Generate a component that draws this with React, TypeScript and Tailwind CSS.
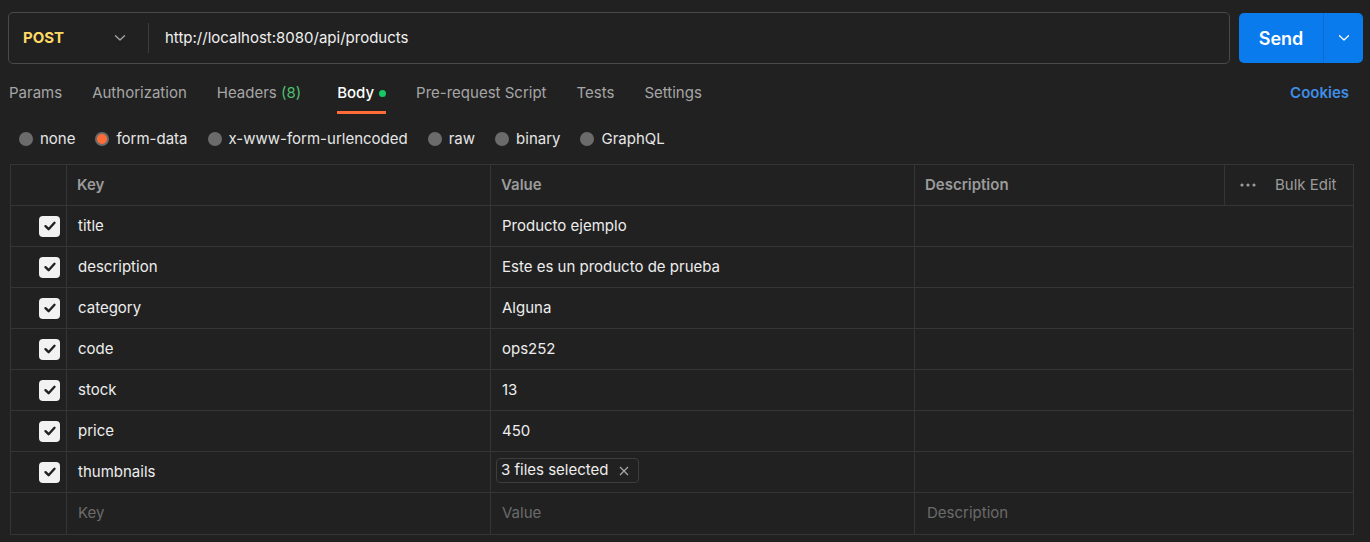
import React from "react";

const rows = [
  ["title", "Producto ejemplo"],
  ["description", "Este es un producto de prueba"],
  ["category", "Alguna"],
  ["code", "ops252"],
  ["stock", "13"],
  ["price", "450"],
];

function Check() {
  return (
    <div className="w-[21px] h-[21px] rounded-[4px] bg-[#f2f2f2] flex items-center justify-center">
      <svg width="14" height="14" viewBox="0 0 14 14" fill="none">
        <path d="M2.5 7.2 L5.6 10.2 L11.5 3.8" stroke="#212121" strokeWidth="2.4" strokeLinecap="round" strokeLinejoin="round" />
      </svg>
    </div>
  );
}

function Chevron({ color = "#a6a6a6" }: { color?: string }) {
  return (
    <svg width="12" height="8" viewBox="0 0 12 8" fill="none">
      <path d="M1.5 1.8 L6 6 L10.5 1.8" stroke={color} strokeWidth="1.3" strokeLinecap="round" strokeLinejoin="round" />
    </svg>
  );
}

function Radio({ label, active }: { label: string; active?: boolean }) {
  return (
    <div className="flex items-center gap-[7px]">
      {active ? (
        <div className="w-[14px] h-[14px] rounded-full bg-[#ff6c37] border-[2px] border-[#6b6b6b]" />
      ) : (
        <div className="w-[14px] h-[14px] rounded-full bg-[#6b6b6b]" />
      )}
      <span className="text-[#e6e6e6]">{label}</span>
    </div>
  );
}

export default function App() {
  return (
    <div
      className="w-[1370px] h-[542px] bg-[#212121] text-[15px] overflow-hidden"
      style={{ fontFamily: "Inter, 'Noto Sans', sans-serif" }}
    >
      {/* URL bar */}
      <div className="flex pt-[12px] pl-[8px] pr-[7px] gap-[9px]">
        <div className="flex-1 h-[52px] border border-[#4a4a4a] rounded-[5px] flex items-center">
          <div className="w-[139px] pl-[14px] pr-[22px] flex items-center justify-between">
            <span className="font-bold text-[#ffd966]">POST</span>
            <Chevron />
          </div>
          <div className="w-px h-[30px] bg-[#3d3d3d]" />
          <span className="pl-[16px] text-[#f0f0f0]">http://localhost:8080/api/products</span>
        </div>
        <div className="w-[124px] h-[50px] mt-[1px] rounded-[5px] bg-[#097bed] flex items-stretch">
          <div className="w-[84px] flex items-center justify-center text-white font-semibold text-[18px]">Send</div>
          <div className="w-px bg-[#0a6cd1]" />
          <div className="flex-1 flex items-center justify-center">
            <Chevron color="#ffffff" />
          </div>
        </div>
      </div>

      {/* Tabs */}
      <div className="flex items-start justify-between pl-[9px] pr-[21px] mt-[18px] h-[34px]">
        <div className="flex gap-[30px] text-[#a6a6a6]">
          <span>Params</span>
          <span>Authorization</span>
          <span>
            Headers <span className="text-[#4fbf6f]">(8)</span>
          </span>
          <div className="flex flex-col items-stretch ml-[6px]">
            <div className="flex items-center gap-[5px] text-white font-medium">
              Body
              <div className="w-[7px] h-[7px] rounded-full bg-[#17c964]" />
            </div>
            <div className="h-[3px] bg-[#ff6c37] mt-[6px]" />
          </div>
          <span>Pre-request Script</span>
          <span>Tests</span>
          <span>Settings</span>
        </div>
        <span className="text-[#3f8ee8] font-semibold">Cookies</span>
      </div>

      {/* Radios */}
      <div className="flex items-center gap-[20px] pl-[19px] mt-[11px] h-[24px]">
        <Radio label="none" />
        <Radio label="form-data" active />
        <Radio label="x-www-form-urlencoded" />
        <Radio label="raw" />
        <Radio label="binary" />
        <Radio label="GraphQL" />
      </div>

      {/* Table */}
      <div className="mx-[10px] mt-[13px] w-[1344px] border border-[#353535]">
        <div className="flex h-[41px] border-b border-[#353535] text-[#9b9b9b] font-semibold">
          <div className="w-[56px] border-r border-[#353535]" />
          <div className="w-[424px] border-r border-[#353535] flex items-center pl-[10px]">Key</div>
          <div className="w-[424px] border-r border-[#353535] flex items-center pl-[10px]">Value</div>
          <div className="w-[310px] border-r border-[#353535] flex items-center pl-[10px]">Description</div>
          <div className="flex-1 flex items-center pl-[15px] gap-[19px] font-normal">
            <svg width="16" height="4" viewBox="0 0 16 4">
              <circle cx="2" cy="2" r="1.6" fill="#9b9b9b" />
              <circle cx="8" cy="2" r="1.6" fill="#9b9b9b" />
              <circle cx="14" cy="2" r="1.6" fill="#9b9b9b" />
            </svg>
            <span>Bulk Edit</span>
          </div>
        </div>
        {rows.map(([k, v]) => (
          <div key={k} className="flex h-[41px] border-b border-[#353535] text-[#ededed]">
            <div className="w-[56px] border-r border-[#353535] flex items-center justify-end pr-[6px]">
              <Check />
            </div>
            <div className="w-[424px] border-r border-[#353535] flex items-center pl-[11px]">{k}</div>
            <div className="w-[424px] border-r border-[#353535] flex items-center pl-[11px]">{v}</div>
            <div className="flex-1" />
          </div>
        ))}
        <div className="flex h-[41px] border-b border-[#353535] text-[#ededed]">
          <div className="w-[56px] border-r border-[#353535] flex items-center justify-end pr-[6px]">
            <Check />
          </div>
          <div className="w-[424px] border-r border-[#353535] flex items-center pl-[11px]">thumbnails</div>
          <div className="w-[424px] border-r border-[#353535] flex items-start pl-[5px] pt-[6px]">
            <div className="h-[25px] border border-[#3d3d3d] rounded-[4px] flex items-center pl-[4px] pr-[9px] gap-[11px]">
              <span>3 files selected</span>
              <svg width="10" height="10" viewBox="0 0 10 10">
                <path d="M1 1 L9 9 M9 1 L1 9" stroke="#a6a6a6" strokeWidth="1.3" />
              </svg>
            </div>
          </div>
          <div className="flex-1" />
        </div>
        <div className="flex h-[41px] text-[#6b6b6b]">
          <div className="w-[56px] border-r border-[#353535]" />
          <div className="w-[424px] border-r border-[#353535] flex items-center pl-[11px]">Key</div>
          <div className="w-[424px] border-r border-[#353535] flex items-center pl-[11px]">Value</div>
          <div className="flex-1 flex items-center pl-[12px]">Description</div>
        </div>
      </div>
    </div>
  );
}
